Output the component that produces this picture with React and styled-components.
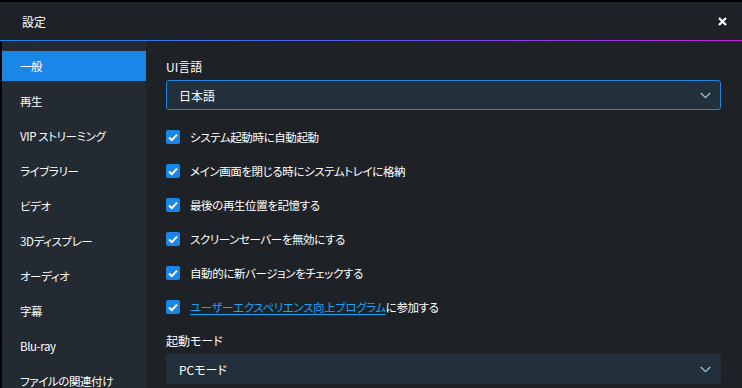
import React, { useState } from "react";
import styled, { createGlobalStyle } from "styled-components";

const GlobalStyle = createGlobalStyle`
  html, body {
    margin: 0;
    padding: 0;
    background: #000;
  }
  body {
    font-family: "Noto Sans CJK JP", "Noto Sans", sans-serif;
    font-feature-settings: "palt";
    color: #fff;
  }
`;

const Window = styled.div`
  width: 742px;
  height: 388px;
  padding-top: 2px;
  box-sizing: border-box;
  display: flex;
  flex-direction: column;
  overflow: hidden;
  background: #000;
`;

const Header = styled.div`
  height: 38px;
  flex-shrink: 0;
  display: flex;
  align-items: center;
  justify-content: space-between;
  padding: 0 14px 0 22px;
  background: #1e2226;
`;

const Title = styled.div`
  font-size: 12px;
  color: #fff;
`;

const CloseButton = styled.button`
  border: 0;
  background: none;
  padding: 0;
  width: 12px;
  height: 12px;
  display: flex;
  align-items: center;
  justify-content: center;
  cursor: pointer;
`;

const Divider = styled.div`
  height: 1px;
  flex-shrink: 0;
  background: linear-gradient(90deg, #1a86e8 0%, #5c58f0 50%, #c81ce0 100%);
`;

const Main = styled.div`
  flex: 1;
  display: flex;
  min-height: 0;
`;

const Sidebar = styled.div`
  width: 144px;
  flex-shrink: 0;
  border-left: 2px solid #000;
  background: #232a32;
  padding-top: 10px;
  display: flex;
  flex-direction: column;
  gap: 5px;
`;

const NavItem = styled.div`
  height: 30px;
  flex-shrink: 0;
  display: flex;
  align-items: center;
  padding-left: 18px;
  font-size: 11.5px;
  letter-spacing: -0.4px;
  color: #fff;
  background: ${(p) => (p.$active ? "#1a86e8" : "transparent")};
  cursor: pointer;
`;

const Content = styled.div`
  flex: 1;
  background: #1e2226;
  padding: 18px 21px 0 20px;
  display: flex;
  flex-direction: column;
`;

const FieldLabel = styled.div`
  font-size: 12px;
  line-height: 16px;
  color: #fff;
  margin-top: ${(p) => p.$top || 0}px;
  margin-bottom: 5px;
`;

const Select = styled.div`
  height: 30px;
  box-sizing: border-box;
  display: flex;
  align-items: center;
  justify-content: space-between;
  padding: 0 9px 0 12px;
  background: #22303c;
  border: 1px solid ${(p) => (p.$focused ? "#1a86e8" : "transparent")};
  border-radius: 3px;
  font-size: 12px;
  color: #fff;
`;

const CheckList = styled.div`
  margin-top: 10px;
  display: flex;
  flex-direction: column;
`;

const CheckRow = styled.label`
  height: 34px;
  display: flex;
  align-items: center;
  gap: 10px;
  font-size: 11.5px;
  letter-spacing: -0.4px;
  color: #fff;
  cursor: pointer;
`;

const Box = styled.span`
  width: 14px;
  height: 14px;
  border-radius: 2px;
  background: #1a86e8;
  display: flex;
  align-items: center;
  justify-content: center;
  flex-shrink: 0;
`;

const Link = styled.a`
  color: #18a4f4;
  text-decoration: underline;
  text-underline-offset: 2px;
`;

const Chevron = () => (
  <svg width="11" height="7" viewBox="0 0 11 7">
    <path d="M0.8 1 L5.5 5.6 L10.2 1" fill="none" stroke="#9cc0d6" strokeWidth="1.3" />
  </svg>
);

const Check = () => (
  <svg width="10" height="9" viewBox="0 0 10 9">
    <path d="M1 4.6 L3.8 7.2 L9 1.6" fill="none" stroke="#fff" strokeWidth="2" />
  </svg>
);

const navItems = [
  "一般",
  "再生",
  "VIP ストリーミング",
  "ライブラリー",
  "ビデオ",
  "3Dディスプレー",
  "オーディオ",
  "字幕",
  "Blu-ray",
  "ファイルの関連付け",
];

const options = [
  "システム起動時に自動起動",
  "メイン画面を閉じる時にシステムトレイに格納",
  "最後の再生位置を記憶する",
  "スクリーンセーバーを無効にする",
  "自動的に新バージョンをチェックする",
];

export default function App() {
  const [active, setActive] = useState(0);

  return (
    <>
      <GlobalStyle />
      <Window>
        <Header>
          <Title>設定</Title>
          <CloseButton>
            <svg width="9" height="9" viewBox="0 0 9 9">
              <path d="M1 1 L8 8 M8 1 L1 8" stroke="#fff" strokeWidth="2.2" />
            </svg>
          </CloseButton>
        </Header>
        <Divider />
        <Main>
          <Sidebar>
            {navItems.map((item, i) => (
              <NavItem key={item} $active={i === active} onClick={() => setActive(i)}>
                {item}
              </NavItem>
            ))}
          </Sidebar>
          <Content>
            <FieldLabel>UI言語</FieldLabel>
            <Select $focused>
              <span>日本語</span>
              <Chevron />
            </Select>
            <CheckList>
              {options.map((o) => (
                <CheckRow key={o}>
                  <Box>
                    <Check />
                  </Box>
                  {o}
                </CheckRow>
              ))}
              <CheckRow>
                <Box>
                  <Check />
                </Box>
                <span>
                  <Link>ユーザーエクスペリエンス向上プログラム</Link>に参加する
                </span>
              </CheckRow>
            </CheckList>
            <FieldLabel $top={9}>起動モード</FieldLabel>
            <Select>
              <span>PCモード</span>
              <Chevron />
            </Select>
          </Content>
        </Main>
      </Window>
    </>
  );
}
